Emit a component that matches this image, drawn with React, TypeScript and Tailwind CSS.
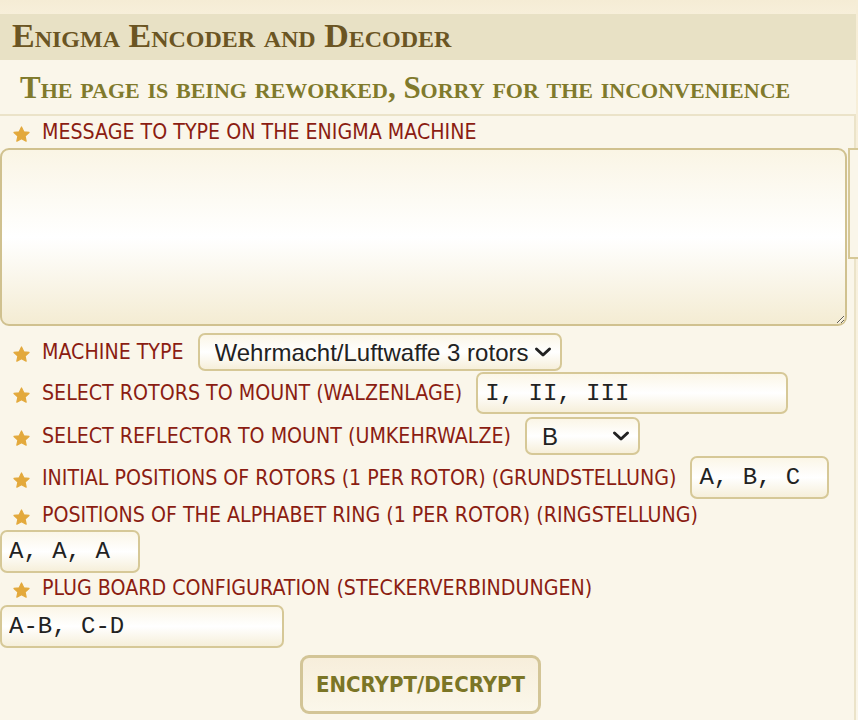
import React from 'react';

const labelCls = "font-['DejaVu_Sans_Condensed','Liberation_Sans',sans-serif] text-[21.2px] leading-[26px] text-[#8b1d12] whitespace-nowrap";
const boxCls = "border-2 border-[#d6c897] rounded-[7px] bg-gradient-to-b from-[#fbf6e7] via-white to-[#f6efda]";
const monoCls = "font-['Liberation_Mono',monospace] text-[24px] text-[#222] px-[7px] outline-none";

const Star = () => (
  <svg width="19" height="19" viewBox="0 0 24 24" className="shrink-0 mt-[6px] blur-[0.4px]">
    <path d="M12 2.5l2.9 6.1 6.6.8-4.9 4.5 1.3 6.6L12 17.2l-5.9 3.3 1.3-6.6-4.9-4.5 6.6-.8z" fill="#e3a93c" stroke="#e3a93c" strokeWidth="1.5" strokeLinejoin="round" />
  </svg>
);

const Label = ({ children }: { children: React.ReactNode }) => (
  <div className="flex items-start gap-[11px] pl-[12px]">
    <Star />
    <span className={labelCls}>{children}</span>
  </div>
);

const Chevron = () => (
  <svg width="18" height="12" viewBox="0 0 18 12" className="absolute right-[10px] top-1/2 -translate-y-1/2 pointer-events-none">
    <path d="M2.5 3l6.5 6 6.5-6" fill="none" stroke="#222" strokeWidth="3" strokeLinecap="round" strokeLinejoin="round" />
  </svg>
);

const Select = ({ value, options, width }: { value: string; options: string[]; width: string }) => (
  <div className={`relative h-[38px] ${width}`}>
    <select
      defaultValue={value}
      className={`appearance-none w-full h-full ${boxCls} pl-[15px] font-['Liberation_Sans',Arial,sans-serif] text-[24px] text-[#222] outline-none`}
    >
      {options.map(o => <option key={o}>{o}</option>)}
    </select>
    <Chevron />
  </div>
);

export default function App() {
  return (
    <div className="min-h-[720px] w-[858px] overflow-hidden bg-gradient-to-b from-[#f6edd6] to-[#faf6ea]">
      <div className="w-[856px]">
        <div className="h-[14px] bg-gradient-to-b from-[#f5ecd5] to-[#f7efda]" />
        <h1 className="h-[46px] flex items-center px-[12px] pb-[3px] bg-[#e8e1c5] font-['Liberation_Serif',serif] font-bold [font-variant:small-caps] text-[34px] leading-none text-[#6b5523]">
          Enigma Encoder and Decoder
        </h1>
        <h2 className="h-[54px] flex items-center px-[20px] bg-[#faf6ea] font-['Liberation_Serif',serif] font-bold [font-variant:small-caps] text-[31px] leading-none text-[#807a2c]">
          The page is being reworked, Sorry for the inconvenience
        </h2>
        <div className="border-t-2 border-r-2 border-[#ebe3c9] bg-[#faf6ea] pt-[3px] pb-[10px] min-h-[606px]">
          <Label>MESSAGE TO TYPE ON THE ENIGMA MACHINE</Label>
          <div className="flex mt-[3px] items-start">
            <textarea
              className="w-[847px] h-[178px] shrink-0 border-2 border-[#d0c18f] rounded-[9px] bg-gradient-to-b from-[#faf5e5] via-white to-[#f4ecd3] outline-none p-2"
            />
            <div className="w-[14px] h-[111px] shrink-0 ml-[1px] border-2 border-[#d6c897] bg-[#faf6ea] relative z-10" />
          </div>

          <div className="flex items-center mt-[7px] h-[38px]">
            <Label>MACHINE TYPE</Label>
            <div className="ml-[14px]">
              <Select value="Wehrmacht/Luftwaffe 3 rotors" options={["Wehrmacht/Luftwaffe 3 rotors", "Kriegsmarine M3", "Kriegsmarine M4"]} width="w-[364px]" />
            </div>
          </div>

          <div className="flex items-center mt-[1px] h-[42px]">
            <Label>SELECT ROTORS TO MOUNT (WALZENLAGE)</Label>
            <input defaultValue="I, II, III" className={`ml-[14px] w-[312px] h-[42px] ${boxCls} ${monoCls}`} />
          </div>

          <div className="flex items-center mt-[3px] h-[38px]">
            <Label>SELECT REFLECTOR TO MOUNT (UMKEHRWALZE)</Label>
            <div className="ml-[14px]">
              <Select value="B" options={["B", "C"]} width="w-[115px]" />
            </div>
          </div>

          <div className="flex items-center mt-[1px] h-[43px]">
            <Label>INITIAL POSITIONS OF ROTORS (1 PER ROTOR) (GRUNDSTELLUNG)</Label>
            <input defaultValue="A, B, C" className={`ml-[14px] w-[139px] h-[43px] ${boxCls} ${monoCls}`} />
          </div>

          <div className="mt-[3px]">
            <Label>POSITIONS OF THE ALPHABET RING (1 PER ROTOR) (RINGSTELLUNG)</Label>
          </div>
          <input defaultValue="A, A, A" className={`block mt-[2px] w-[140px] h-[43px] ${boxCls} ${monoCls}`} />

          <div className="mt-[2px]">
            <Label>PLUG BOARD CONFIGURATION (STECKERVERBINDUNGEN)</Label>
          </div>
          <input defaultValue="A-B, C-D" className={`block mt-[4px] w-[284px] h-[43px] ${boxCls} ${monoCls}`} />

          <button className="block mt-[7px] ml-[300px] w-[241px] h-[59px] border-[3px] border-[#d3c597] rounded-[9px] bg-gradient-to-b from-[#f7eedb] to-[#fbf7ea] font-['DejaVu_Sans_Condensed','Liberation_Sans',sans-serif] font-bold text-[22px] text-[#7b7526]">
            ENCRYPT/DECRYPT
          </button>
        </div>
      </div>
    </div>
  );
}
